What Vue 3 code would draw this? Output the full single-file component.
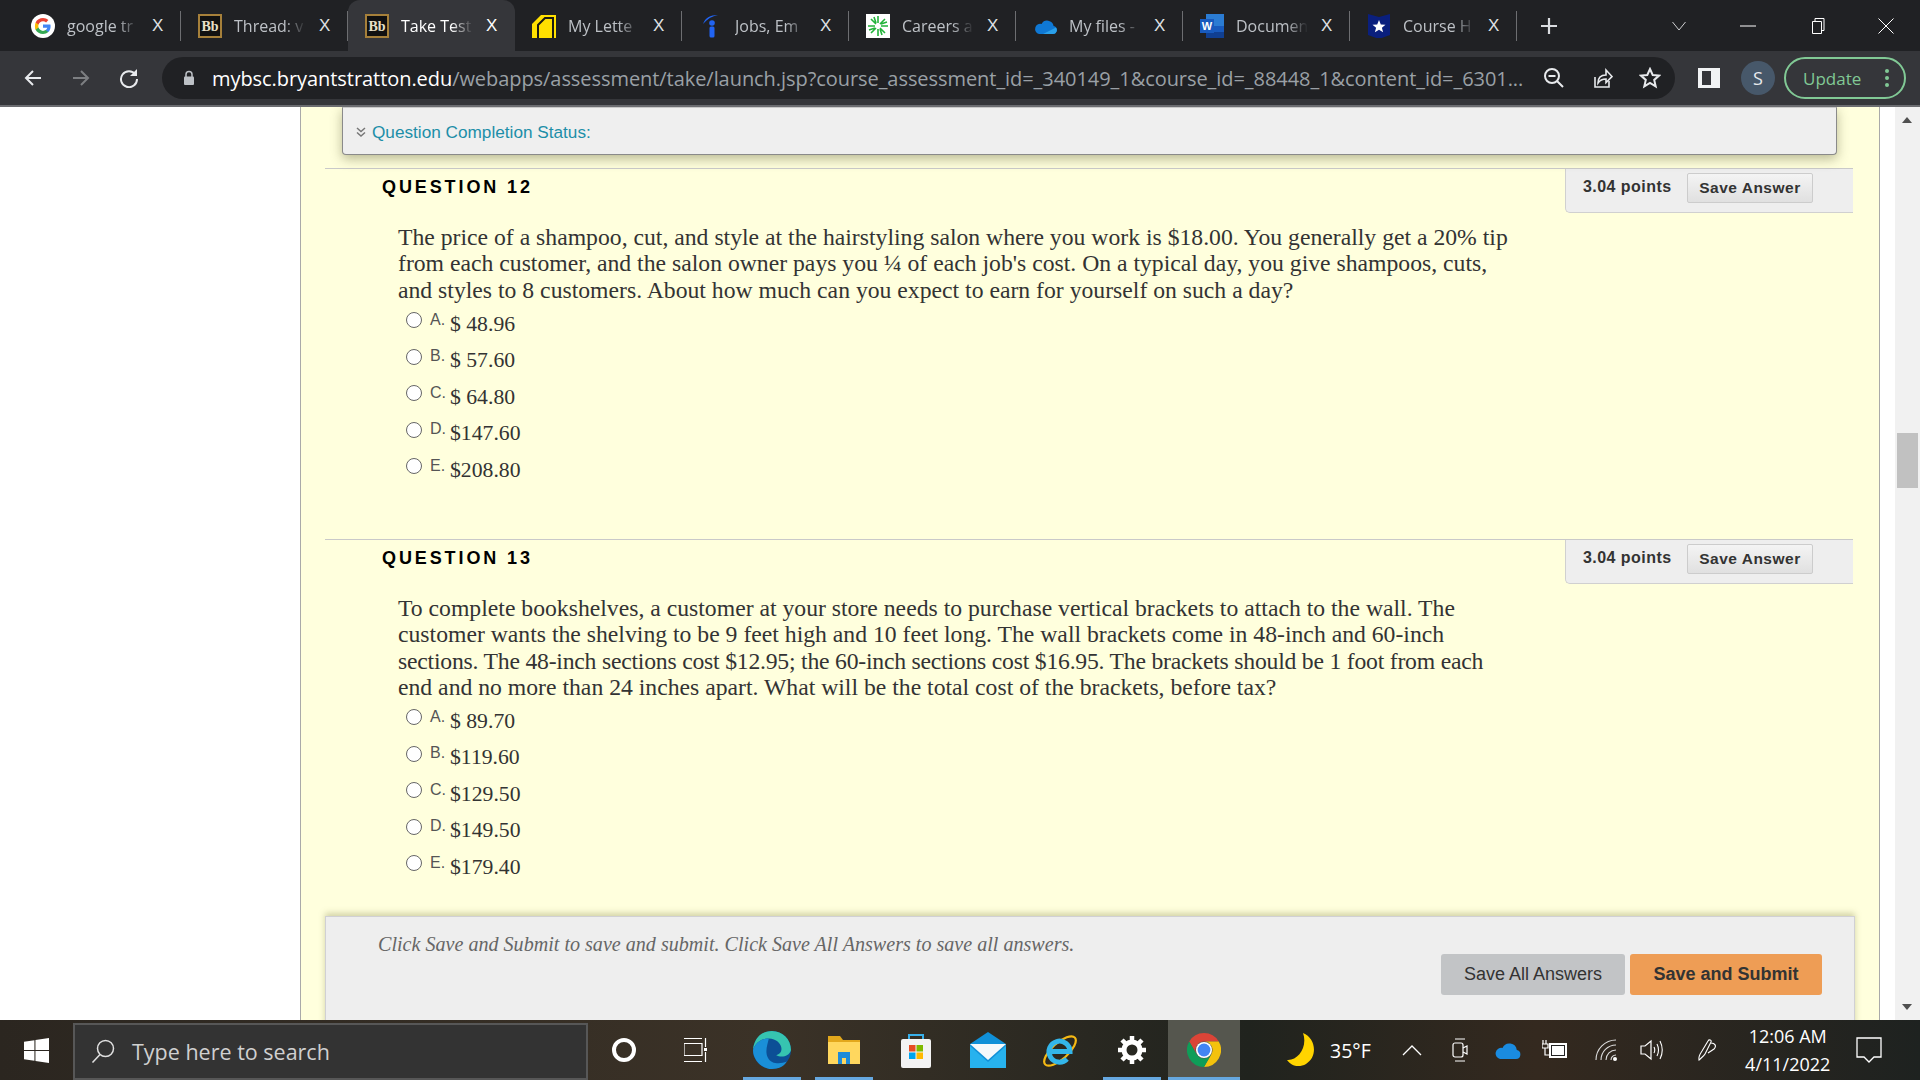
<template>
  <div class="screen">
    <!-- browser tab strip -->
    <div class="tabstrip">
      <div v-for="tab in tabs" :key="tab.title" class="tab" :class="{ active: tab.active, nosep: tab.nosep }">
        <span class="favicon">
          <svg v-if="tab.icon === 'google'" viewBox="0 0 24 24" width="24" height="24">
            <circle cx="12" cy="12" r="12" fill="#fff" />
            <path d="M19.600 12.200c0-.6-.1-1.100-.2-1.600H12v3.100h4.300c-.2 1-.8 1.800-1.600 2.400v2h2.600c1.500-1.400 2.300-3.400 2.300-5.900z" fill="#4285f4" />
            <path d="M12 20c2.200 0 4-.7 5.300-1.900l-2.600-2c-.7.500-1.600.8-2.700.8-2.100 0-3.900-1.400-4.500-3.300H4.600v2.100C5.900 18.300 8.700 20 12 20z" fill="#34a853" />
            <path d="M7.500 13.600c-.3-1-.3-2.100 0-3.100V8.400H4.600c-.9 1.800-.9 5.400 0 7.300z" fill="#fbbc05" />
            <path d="M12 7.200c1.200 0 2.200.4 3.100 1.200l2.300-2.300C16 4.800 14.200 4 12 4 8.700 4 5.900 5.700 4.600 8.400l2.900 2.100C8.100 8.600 9.900 7.200 12 7.200z" fill="#ea4335" />
          </svg>
          <svg v-else-if="tab.icon === 'bb'" viewBox="0 0 24 24" width="24" height="24">
            <rect x="1" y="1" width="22" height="22" fill="#111" stroke="#a6803a" stroke-width="2" />
            <text x="12" y="17" text-anchor="middle" class="bb-text">Bb</text>
          </svg>
          <svg v-else-if="tab.icon === 'letter'" viewBox="0 0 24 24" width="24" height="24">
            <path d="M0 24V10L9 1h15v23z" fill="#ffe000" />
            <path d="M6 24V11l7-7h8v20" fill="#ffe000" stroke="#1a1a12" stroke-width="2" />
          </svg>
          <svg v-else-if="tab.icon === 'jobs'" viewBox="0 0 24 24" width="24" height="24">
            <path d="M4 10C6 4 11 1 19 1c-6 1-11 4-15 9z" fill="#2164f3" />
            <circle cx="13" cy="9" r="2.800" fill="#2164f3" />
            <rect x="10.500" y="12.500" width="5" height="11" rx="1.500" fill="#2164f3" />
          </svg>
          <svg v-else-if="tab.icon === 'careers'" viewBox="0 0 24 24" width="24" height="24">
            <rect width="24" height="24" fill="#fff" />
            <g stroke="#22b33a" stroke-width="1.600">
              <path d="M12 2v7M12 15v7M2 12h7M15 12h7M5 5l5 5M14 14l5 5M19 5l-5 5M10 14l-5 5M8 3l2 6M16 21l-2-6M3 16l6-2M21 8l-6 2" />
            </g>
          </svg>
          <svg v-else-if="tab.icon === 'onedrive'" viewBox="0 0 24 24" width="24" height="24">
            <path d="M6 20h14a4 4 0 0 0 .6-7.900A6.500 6.500 0 0 0 8.500 10 5 5 0 0 0 6 20z" fill="#0f78d4" />
            <path d="M6 20h14a4 4 0 0 0 3-6.500L10 20z" fill="#2aa0ea" />
          </svg>
          <svg v-else-if="tab.icon === 'word'" viewBox="0 0 24 24" width="24" height="24">
            <rect x="6" y="0" width="18" height="24" fill="#2b7cd3" />
            <rect x="6" y="12" width="18" height="6" fill="#185abd" />
            <rect x="6" y="18" width="18" height="6" fill="#103f91" />
            <rect x="0" y="5" width="14" height="14" fill="#185abd" />
            <text x="7" y="16" text-anchor="middle" class="word-text">W</text>
          </svg>
          <svg v-else viewBox="0 0 24 24" width="24" height="24">
            <path d="M1 0l11 3 11-3v21l-11 4-11-4z" fill="#0a1f7d" />
            <path d="M12 6l1.800 4.400 4.700.3-3.600 3 1.200 4.600-4.100-2.500-4.100 2.500 1.200-4.600-3.600-3 4.700-.3z" fill="#fff" />
          </svg>
        </span>
        <span class="tab-title">{{ tab.title }}</span>
        <span class="tab-close">X</span>
      </div>
      <svg class="newtab" viewBox="0 0 18 18" width="18" height="18">
        <path d="M9 1v16M1 9h16" stroke="#dadce0" stroke-width="2.200" />
      </svg>
      <div class="winctl">
        <svg viewBox="0 0 16 10" width="16" height="10"><path d="M1.500 1l6.500 8 6.500-8" fill="none" stroke="#cfd0d2" /></svg>
        <svg viewBox="0 0 16 2" width="16" height="2"><path d="M0 1h16" stroke="#fff" /></svg>
        <svg viewBox="0 0 16 16" width="16" height="16"><path d="M3.500 3.500h9v12h-9zM6 3.500V.5h9v12h-2.500" fill="none" stroke="#fff" /></svg>
        <svg viewBox="0 0 16 16" width="16" height="16"><path d="M.5.500l15 15M15.500.500l-15 15" stroke="#fff" /></svg>
      </div>
    </div>

    <!-- address bar -->
    <div class="toolbar">
      <svg class="nav-ic" viewBox="0 0 20 20" width="20" height="20"><path d="M18 10H3M10 3l-7 7 7 7" fill="none" stroke="#e8eaed" stroke-width="2" /></svg>
      <svg class="nav-ic" viewBox="0 0 20 20" width="20" height="20"><path d="M2 10h15M10 3l7 7-7 7" fill="none" stroke="#7d7f82" stroke-width="2" /></svg>
      <svg class="nav-ic" viewBox="0 0 20 20" width="20" height="20"><path d="M16.500 6.500A8 8 0 1 0 18 11" fill="none" stroke="#e8eaed" stroke-width="2" /><path d="M18 1v7h-7z" fill="#e8eaed" /></svg>
      <div class="omnibox">
        <svg class="lock" viewBox="0 0 12 16" width="12" height="16"><path d="M3 7V4.500a3 3 0 0 1 6 0V7" fill="none" stroke="#bdc1c6" stroke-width="1.500" /><rect x="1" y="6.500" width="10" height="8.500" rx="1" fill="#bdc1c6" /></svg>
        <span class="url"><b>mybsc.bryantstratton.edu</b>/webapps/assessment/take/launch.jsp?course_assessment_id=_340149_1&amp;course_id=_88448_1&amp;content_id=_6301...</span>
        <svg class="omni-ic" viewBox="0 0 22 22" width="22" height="22"><circle cx="9" cy="9" r="7" fill="none" stroke="#e8eaed" stroke-width="2" /><path d="M14 14l6 6M5.500 9h7" stroke="#e8eaed" stroke-width="2" /></svg>
        <svg class="omni-ic" viewBox="0 0 22 22" width="22" height="22"><path d="M4 10v10h14v-6" fill="none" stroke="#e8eaed" stroke-width="1.600" /><path d="M7 16c0-5 3-8 8-8V3l6 6.500-6 6V12c-3 0-6 1-8 4z" fill="none" stroke="#e8eaed" stroke-width="1.600" /></svg>
        <svg class="omni-ic" viewBox="0 0 22 22" width="22" height="22"><path d="M11 2l2.700 6 6.300.6-4.800 4.300 1.500 6.500L11 16l-5.700 3.400 1.500-6.500L2 8.600 8.300 8z" fill="none" stroke="#e8eaed" stroke-width="2" /></svg>
      </div>
      <svg class="side-ic" viewBox="0 0 22 22" width="22" height="22"><path fill-rule="evenodd" d="M0 1h22v20H0zM4 4v14h9V4z" fill="#f1f3f4" /></svg>
      <span class="avatar">S</span>
      <div class="update">
        <span>Update</span>
        <i class="dots"></i>
      </div>
    </div>

    <!-- page -->
    <div class="page">
      <div class="page-left"></div>
      <main class="panel">
        <div class="status">
          <svg viewBox="0 0 10 10" width="10" height="10"><path d="M1 1l4 3.500L9 1M1 5.500L5 9l4-3.500" fill="none" stroke="#777" stroke-width="1.500" /></svg>
          <span>Question Completion Status:</span>
        </div>

        <section v-for="q in questions" :key="q.num" class="question" :class="'q' + q.num">
          <div class="q-head">
            <h3>QUESTION {{ q.num }}</h3>
            <div class="q-points">
              <span>3.04 points</span>
              <button>Save Answer</button>
            </div>
          </div>
          <div class="q-text">
            <div v-for="line in q.lines" :key="line" :class="{ tight: line.includes('$12.95') }">{{ line }}</div>
          </div>
          <div v-for="opt in q.options" :key="opt.k" class="option">
            <span class="radio"></span>
            <span class="opt-key">{{ opt.k }}.</span>
            <span class="opt-val">{{ opt.v }}</span>
          </div>
        </section>

        <div class="footer">
          <p>Click Save and Submit to save and submit. Click Save All Answers to save all answers.</p>
          <div class="footer-btns">
            <button class="btn-all">Save All Answers</button>
            <button class="btn-submit">Save and Submit</button>
          </div>
        </div>
      </main>
      <div class="gutter"></div>
      <div class="scrollbar">
        <i class="arrow up"></i>
        <i class="thumb"></i>
        <i class="arrow down"></i>
      </div>
    </div>

    <!-- windows taskbar -->
    <footer class="taskbar">
      <div class="slot start">
        <svg viewBox="0 0 24 24" width="25" height="25"><path d="M0 3.500l10-1.400v9.400H0zM11 2l13-2v11.500H11zM0 12.500h10v9.400L0 20.500zM11 12.500h13V24l-13-2z" fill="#fff" /></svg>
      </div>
      <div class="search">
        <svg viewBox="0 0 24 24" width="24" height="24"><circle cx="14.500" cy="9.500" r="8" fill="none" stroke="#e0e0e0" stroke-width="1.500" /><path d="M9 15.500l-7.500 8" stroke="#e0e0e0" stroke-width="1.500" /></svg>
        <span>Type here to search</span>
      </div>
      <div class="slot w72"><i class="cortana"></i></div>
      <div class="slot w72">
        <svg viewBox="0 0 24 24" width="24" height="24"><path d="M0 .5h18M0 5.500h18v12H0zM0 23.500h18M21.500 0v9M21.500 14v10" fill="none" stroke="#fff" stroke-width="1.200" /><rect x="20" y="10" width="3" height="3" fill="#fff" /></svg>
      </div>
      <div class="slot w72 running edge">
        <svg viewBox="0 0 36 36" width="38" height="38">
          <circle cx="18" cy="18" r="18" fill="#0c4f96" />
          <path d="M18 0C7 0 1 8 0 18c3-8 9-11 15-11 7 0 12 5 12 10 0 3-2 5-5 6 4 2 12 2 14-5C36 8 28 0 18 0z" fill="#36c4b0" />
          <path d="M0 18c0 10 9 18 18 18 6 0 11-2 14-7-7 3-15 2-18-4-3-6 0-13 1-18C9 7 3 10 0 18z" fill="#1a8fd8" />
        </svg>
      </div>
      <div class="slot w72 running">
        <svg viewBox="0 0 36 36" width="36" height="36">
          <path d="M2 4h12l3 4h17v24H2z" fill="#e3a81c" />
          <path d="M2 10h32v22H2z" fill="#ffd75e" />
          <path d="M12 32V20h12v12h-4v-6h-4v6z" fill="#1f8bd8" />
        </svg>
      </div>
      <div class="slot w72">
        <svg viewBox="0 0 36 36" width="36" height="36">
          <path d="M11 8V3h14v5" fill="none" stroke="#38b0ea" stroke-width="2" />
          <rect x="3" y="7" width="30" height="29" rx="2" fill="#f3f3f3" />
          <rect x="11" y="13" width="6.500" height="6.500" fill="#e74c24" />
          <rect x="18.500" y="13" width="6.500" height="6.500" fill="#7fba00" />
          <rect x="11" y="20.500" width="6.500" height="6.500" fill="#00a4ef" />
          <rect x="18.500" y="20.500" width="6.500" height="6.500" fill="#ffb900" />
        </svg>
      </div>
      <div class="slot w72">
        <svg viewBox="0 0 36 36" width="36" height="36">
          <path d="M0 12L18 0l18 12v24H0z" fill="#1090d8" />
          <path d="M0 12h36L18 28z" fill="#f4f8fb" />
          <path d="M0 36V14l18 16 18-16v22z" fill="#27b2ee" />
        </svg>
      </div>
      <div class="slot w72">
        <svg viewBox="0 0 36 36" width="36" height="36">
          <ellipse cx="18" cy="19" rx="20" ry="8" transform="rotate(-42 18 19)" fill="none" stroke="#f5b914" stroke-width="2.200" />
          <path d="M7 19.500h21A10.500 10.500 0 1 0 25 27" fill="none" stroke="#33b6ea" stroke-width="5" />
        </svg>
      </div>
      <div class="slot w72 running">
        <svg viewBox="0 0 30 30" width="30" height="30">
          <circle cx="15" cy="15" r="8" fill="none" stroke="#fff" stroke-width="5" />
          <path d="M15 1v6M15 23v6M1 15h6M23 15h6M5 5l4.200 4.200M20.800 20.800L25 25M25 5l-4.200 4.200M9.200 20.800L5 25" stroke="#fff" stroke-width="4.500" />
        </svg>
      </div>
      <div class="slot w72 running current">
        <svg viewBox="0 0 36 36" width="34" height="38">
          <path d="M2.400 9A18 18 0 0 1 33.600 9H18a9 9 0 0 0-7.800 13.500z" fill="#db4437" />
          <path d="M33.600 9A18 18 0 0 1 18 36l7.800-13.500A9 9 0 0 0 18 9z" fill="#f4c20d" />
          <path d="M18 36A18 18 0 0 1 2.400 9l7.800 13.500a9 9 0 0 0 15.600 0z" fill="#0f9d58" />
          <circle cx="18" cy="18" r="8.500" fill="#fff" />
          <circle cx="18" cy="18" r="6.800" fill="#4285f4" />
        </svg>
      </div>
      <div class="tray">
        <svg class="moon" viewBox="0 0 30 34" width="30" height="34"><path d="M17 0c13 5 15 24 3 31-7 4-15 2-19-4 11 1 21-13 16-27z" fill="#ffd400" /></svg>
        <span class="temp">35°F</span>
        <svg class="t-caret" viewBox="0 0 20 12" width="20" height="12"><path d="M1 11l9-9 9 9" fill="none" stroke="#fff" stroke-width="1.300" /></svg>
        <svg class="t-meet" viewBox="0 0 16 24" width="16" height="24"><path d="M3 1h10M3 23h10" stroke="#fff" /><rect x="1" y="5" width="10" height="14" rx="2" fill="none" stroke="#fff" stroke-width="1.200" /><path d="M11 10l4-2v8l-4-2" fill="none" stroke="#fff" stroke-width="1.200" /></svg>
        <svg class="t-drive" viewBox="0 0 26 18" width="26" height="18"><path d="M5 18h16a4.500 4.500 0 0 0 .8-8.900A7.500 7.500 0 0 0 7.500 7 5.500 5.500 0 0 0 5 18z" fill="#1a8be0" /></svg>
        <svg class="t-batt" viewBox="0 0 26 20" width="26" height="20"><path d="M1 0v4M4 0v4M0 4h6v4H0zM3 8v7h4" fill="none" stroke="#fff" stroke-width="1.200" /><rect x="7" y="3" width="18" height="15" fill="#fff" /><rect x="9" y="5" width="14" height="11" fill="#222" /><rect x="10" y="6" width="12" height="9" fill="#fff" /></svg>
        <svg class="t-wifi" viewBox="0 0 22 22" width="22" height="22"><g fill="none" stroke="#ddd" stroke-width="1.100"><path d="M1 21A20 20 0 0 1 21 1" /><path d="M6 21A15 15 0 0 1 21 6" /><path d="M11 21a10 10 0 0 1 10-10" /><path d="M16 21a5 5 0 0 1 5-5" /></g><circle cx="20" cy="20" r="2" fill="#fff" /></svg>
        <svg class="t-vol" viewBox="0 0 24 22" width="24" height="22"><path d="M1 7h4l6-5v18l-6-5H1z" fill="none" stroke="#fff" stroke-width="1.200" /><path d="M14 8c1 2 1 4 0 6M17 5c2 4 2 8 0 12M20 2c3 6 3 12 0 18" fill="none" stroke="#fff" stroke-width="1.100" /></svg>
        <svg class="t-pen" viewBox="0 0 22 24" width="22" height="24"><path d="M2 22c-1-3 1-6 3-9l6-10c1-2 4-1 3 1l-6 12c-1 2-4 4-6 6zM14 5c4 0 6 3 3 6l-6 4" fill="none" stroke="#fff" stroke-width="1.100" /></svg>
        <div class="clock">
          <span>12:06 AM</span>
          <span>4/11/2022</span>
        </div>
        <svg class="t-note" viewBox="0 0 26 26" width="26" height="26"><path d="M1 1h24v19h-7l-5 5-5-5H1z" fill="none" stroke="#fff" stroke-width="1.300" /></svg>
      </div>
    </footer>
  </div>
</template>

<script setup>
const tabs = [
  { title: 'google tr', icon: 'google' },
  { title: 'Thread: v', icon: 'bb' },
  { title: 'Take Test', icon: 'bb', active: true, nosep: true },
  { title: 'My Lette', icon: 'letter' },
  { title: 'Jobs, Em', icon: 'jobs' },
  { title: 'Careers a', icon: 'careers' },
  { title: 'My files -', icon: 'onedrive' },
  { title: 'Documen', icon: 'word' },
  { title: 'Course H', icon: 'star' }
]

const questions = [
  {
    num: 12,
    lines: [
      'The price of a shampoo, cut, and style at the hairstyling salon where you work is $18.00. You generally get a 20% tip',
      "from each customer, and the salon owner pays you ¼ of each job's cost. On a typical day, you give shampoos, cuts,",
      'and styles to 8 customers. About how much can you expect to earn for yourself on such a day?'
    ],
    options: [
      { k: 'A', v: '$ 48.96' },
      { k: 'B', v: '$ 57.60' },
      { k: 'C', v: '$ 64.80' },
      { k: 'D', v: '$147.60' },
      { k: 'E', v: '$208.80' }
    ]
  },
  {
    num: 13,
    lines: [
      'To complete bookshelves, a customer at your store needs to purchase vertical brackets to attach to the wall. The',
      'customer wants the shelving to be 9 feet high and 10 feet long. The wall brackets come in 48-inch and 60-inch',
      'sections. The 48-inch sections cost $12.95; the 60-inch sections cost $16.95. The brackets should be 1 foot from each',
      'end and no more than 24 inches apart. What will be the total cost of the brackets, before tax?'
    ],
    options: [
      { k: 'A', v: '$ 89.70' },
      { k: 'B', v: '$119.60' },
      { k: 'C', v: '$129.50' },
      { k: 'D', v: '$149.50' },
      { k: 'E', v: '$179.40' }
    ]
  }
]
</script>

<style>
html, body { margin: 0; height: 100%; overflow: hidden; }
</style>

<style scoped>
.screen {
  width: 1920px;
  height: 1080px;
  display: flex;
  flex-direction: column;
  overflow: hidden;
  background: #fff;
  font-family: "Liberation Sans", sans-serif;
}

/* tab strip */
.tabstrip {
  height: 51px;
  flex: none;
  display: flex;
  align-items: stretch;
  padding-left: 14px;
  background: #202124;
}
.tab {
  width: 167px;
  height: 51px;
  box-sizing: border-box;
  display: flex;
  align-items: center;
  padding-left: 17px;
  position: relative;
  color: #bdc1c6;
  font-family: "Open Sans", sans-serif;
  font-size: 16px;
}
.tab::after {
  content: "";
  position: absolute;
  right: 0;
  top: 11px;
  height: 30px;
  width: 1px;
  background: #6d6e71;
}
.tab.nosep::after { display: none; }
.tab.active {
  background: #35363a;
  border-radius: 12px 12px 0 0;
  color: #fff;
}
.favicon { width: 24px; height: 24px; flex: none; display: block; }
.favicon svg { display: block; }
.tab-title {
  width: 72px;
  margin-left: 12px;
  overflow: hidden;
  white-space: nowrap;
  -webkit-mask-image: linear-gradient(90deg, #000 70%, transparent 100%);
  mask-image: linear-gradient(90deg, #000 70%, transparent 100%);
}
.tab-close {
  margin-left: 13px;
  font-family: "Liberation Sans", sans-serif;
  font-size: 17px;
  color: #dfe1e5;
}
.tab.active .tab-close { color: #fff; }
.bb-text { font-family: "Liberation Serif", serif; font-size: 14px; font-weight: 700; fill: #e8e0c8; }
.word-text { font-family: "Liberation Sans", sans-serif; font-size: 11px; font-weight: 700; fill: #fff; }
.newtab { align-self: center; margin-left: 23px; }
.winctl {
  display: flex;
  align-items: center;
  margin-left: 113px;
  gap: 53px;
}

/* toolbar */
.toolbar {
  height: 56px;
  flex: none;
  box-sizing: border-box;
  display: flex;
  align-items: center;
  padding-left: 23px;
  background: #35363a;
  border-bottom: 2px solid #6b6c70;
}
.nav-ic { margin-right: 28px; flex: none; }
.nav-ic:nth-child(3) { margin-right: 24px; }
.omnibox {
  width: 1513px;
  height: 42px;
  flex: none;
  margin-left: -1px;
  box-sizing: border-box;
  border-radius: 21px;
  background: #202124;
  display: flex;
  align-items: center;
  padding-left: 21px;
  color: #9aa0a6;
}
.lock { flex: none; }
.url {
  margin-left: 17px;
  width: 1329px;
  flex: none;
  font-family: "Open Sans", sans-serif;
  font-size: 20px;
  letter-spacing: -0.06px;
  white-space: nowrap;
  overflow: hidden;
}
.url b { font-weight: 400; color: #fff; }
.omni-ic { flex: none; margin-left: 26px; }
.omni-ic:nth-of-type(2) { margin-left: 2px; }
.side-ic { flex: none; margin-left: 23px; }
.avatar {
  width: 34px;
  height: 34px;
  margin-left: 21px;
  flex: none;
  border-radius: 50%;
  background: #47586a;
  color: #e8eaed;
  font-family: "Open Sans", sans-serif;
  font-size: 18px;
  display: flex;
  align-items: center;
  justify-content: center;
}
.update {
  width: 122px;
  height: 42px;
  margin-left: 9px;
  box-sizing: border-box;
  border: 2px solid #81c995;
  border-radius: 21px;
  display: flex;
  align-items: center;
  padding-left: 17px;
  color: #81c995;
  font-family: "Open Sans", sans-serif;
  font-size: 17px;
  position: relative;
}
.dots, .dots::before, .dots::after {
  position: absolute;
  width: 4px;
  height: 4px;
  border-radius: 50%;
  background: #81c995;
}
.dots { right: 15px; top: 17px; }
.dots::before { content: ""; top: -7px; left: 0; }
.dots::after { content: ""; top: 7px; left: 0; }

/* page */
.page {
  flex: 1;
  min-height: 0;
  display: flex;
  background: #fff;
}
.page-left { width: 300px; flex: none; }
.panel {
  width: 1580px;
  flex: none;
  box-sizing: border-box;
  border-left: 1px solid #a9a9a9;
  border-right: 1px solid #a9a9a9;
  background: #ffffdd;
  padding: 0 0 0 24px;
  overflow: hidden;
}
.gutter { width: 15px; flex: none; }
.scrollbar {
  width: 25px;
  flex: none;
  background: #f1f1f1;
  position: relative;
}
.arrow { position: absolute; left: 7px; width: 0; height: 0; border: 5.500px solid transparent; }
.arrow.up { top: 10px; border-top: 0; border-bottom: 6px solid #505050; }
.arrow.down { bottom: 10px; border-bottom: 0; border-top: 6px solid #505050; }
.thumb { position: absolute; left: 2px; top: 326px; width: 21px; height: 55px; background: #c1c1c1; }

.status {
  width: 1495px;
  height: 48px;
  margin-left: 17px;
  box-sizing: border-box;
  background: #efefef;
  border: 1px solid #8a8a8a;
  border-top-color: #c8c8c8;
  border-radius: 0 0 4px 4px;
  box-shadow: 0 4px 12px rgba(100, 100, 60, 0.45);
  display: flex;
  align-items: center;
  padding: 2px 0 0 13px;
  gap: 6px;
  color: #1c8ea8;
  font-size: 17.200px;
  position: relative;
  z-index: 2;
}

.question { border-top: 1px solid #c9c9c9; width: 1528px; }
.q12 { margin-top: 13px; height: 370px; }
.q13 { height: 375px; }
.q-head { display: flex; justify-content: space-between; align-items: flex-start; height: 44px; }
.q-head h3 {
  margin: 9px 0 0 57px;
  font-size: 18px;
  line-height: 18px;
  letter-spacing: 2.900px;
  color: #000;
}
.q-points {
  width: 288px;
  height: 44px;
  box-sizing: border-box;
  background: #eee;
  border: 1px solid #d0d0d0;
  border-width: 0 0 1px 1px;
  border-radius: 0 0 0 5px;
  display: flex;
  align-items: flex-start;
  padding: 0 40px 0 17px;
  justify-content: space-between;
  color: #333;
  font-size: 16px;
  font-weight: 700;
}
.q-points span { letter-spacing: 0.450px; line-height: 18px; margin-top: 9px; }
.q-points button {
  width: 126px;
  height: 30px;
  margin-top: 4px;
  padding: 0;
  border: 1px solid #ccc;
  border-radius: 2px;
  background: linear-gradient(#f4f4f4, #e0e0e0);
  color: #333;
  font-family: "Liberation Sans", sans-serif;
  font-size: 15.500px;
  font-weight: 700;
  letter-spacing: 0.500px;
}
.q-text {
  margin: 11px 0 0 73px;
  font-family: "Liberation Serif", serif;
  font-size: 23.700px;
  line-height: 26.300px;
  color: #333;
  white-space: nowrap;
}
.q-text .tight { letter-spacing: -0.22px; }
.option {
  height: 36.500px;
  display: flex;
  align-items: center;
  margin-left: 81px;
  color: #333;
}
.q-text + .option { margin-top: 3px; }
.radio {
  width: 14px;
  height: 14px;
  border: 1px solid #666;
  border-radius: 50%;
  background: #fff;
  margin-top: -8px;
  flex: none;
}
.opt-key {
  margin: -9px 0 0 8px;
  width: 20px;
  flex: none;
  font-size: 16px;
  color: #555;
}
.opt-val {
  font-family: "Liberation Serif", serif;
  font-size: 21.700px;
}

.footer {
  margin-top: 1px;
  width: 1530px;
  height: 200px;
  box-sizing: border-box;
  background: #eee;
  border: 1px solid #d0d0d4;
  box-shadow: 0 -3px 6px rgba(130, 130, 70, 0.35);
  position: relative;
  padding: 16px 32px 0 52px;
}
.footer p {
  margin: 0;
  font-family: "Liberation Serif", serif;
  font-style: italic;
  font-size: 20.100px;
  line-height: 22px;
  color: #666;
}
.footer-btns {
  margin-top: -1px;
  display: flex;
  justify-content: flex-end;
  gap: 5px;
}
.footer-btns button {
  height: 41px;
  border: 0;
  border-radius: 3px;
  padding: 0;
  font-family: "Liberation Sans", sans-serif;
  font-size: 18px;
  color: #333;
}
.btn-all { width: 184px; background: #c2c4c6; }
.btn-submit { width: 192px; background: #ee9d55; font-weight: 700; }

/* taskbar */
.taskbar {
  height: 60px;
  flex: none;
  display: flex;
  align-items: center;
  background: linear-gradient(90deg, #2b2620, #3b3227 40%, #20231e 65%, #34291f 80%, #1e2220);
  color: #fff;
}
.slot {
  height: 60px;
  display: flex;
  align-items: center;
  justify-content: center;
  flex: none;
  position: relative;
}
.start { width: 73px; }
.w72 { width: 72px; }
.edge { margin-left: 4px; }
.search {
  width: 515px;
  height: 57px;
  margin-top: 2px;
  box-sizing: border-box;
  flex: none;
  background: #333;
  border: 2px solid #575757;
  display: flex;
  align-items: center;
  padding-left: 16px;
  gap: 17px;
  color: #d0d0d0;
  font-family: "Open Sans", sans-serif;
  font-size: 21.500px;
}
.cortana {
  width: 16px;
  height: 16px;
  border: 4px solid #fff;
  border-radius: 50%;
}
.running::after {
  content: "";
  position: absolute;
  left: 7px;
  right: 7px;
  bottom: 0;
  height: 3px;
  background: #66a8e0;
}
.current { background: #55564e; }
.current::after { left: 0; right: 0; }
.tray {
  display: flex;
  align-items: center;
  flex: 1;
  height: 60px;
  position: relative;
}
.moon { margin-left: 46px; }
.temp {
  margin-left: 14px;
  font-family: "Open Sans", sans-serif;
  font-size: 19.500px;
}
.t-caret { margin-left: 31px; }
.t-meet { margin-left: 30px; }
.t-drive { margin-left: 27px; }
.t-batt { margin-left: 21px; }
.t-wifi { margin-left: 27px; }
.t-vol { margin-left: 23px; }
.t-pen { margin-left: 33px; }
.clock {
  width: 110px;
  margin-left: 14px;
  display: flex;
  flex-direction: column;
  align-items: center;
  gap: 4px;
  font-family: "Open Sans", sans-serif;
  font-size: 18px;
  line-height: 24px;
}
.t-note { margin-left: 13px; }
</style>
